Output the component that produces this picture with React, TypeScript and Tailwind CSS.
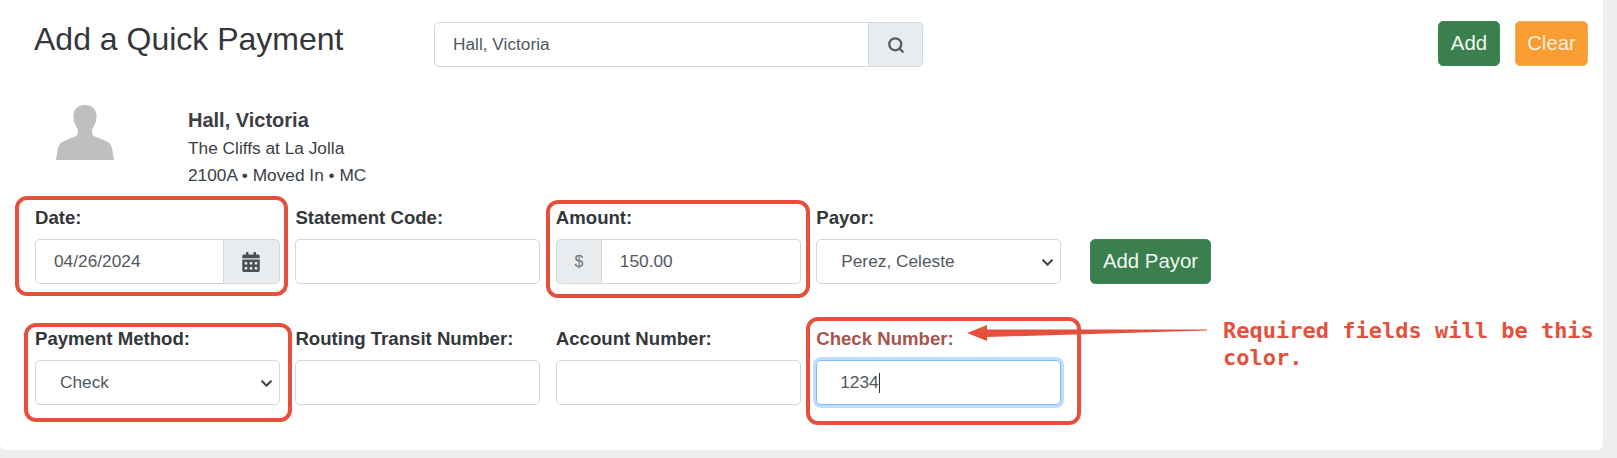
import { Search } from 'lucide-react';
import { FaCalendarAlt, FaChevronDown } from 'react-icons/fa';

const inputClass =
  'h-[45px] w-full rounded-[5px] border border-[#d3d7da] bg-white px-[18px] text-[17.300px] text-[#52585e] outline-none';

function Field({ label, required, children }: { label: string; required?: boolean; children: React.ReactNode }) {
  return (
    <div className="flex flex-col">
      <label className={`mb-[9px] h-[24px] text-[18.600px] leading-6 font-bold ${required ? 'text-[#a9534d]' : 'text-[#33373b]'}`}>
        {label}
      </label>
      {children}
    </div>
  );
}

function SelectBox({ value }: { value: string }) {
  return (
    <div className="relative">
      <select className={`${inputClass} appearance-none pl-[24px]`} defaultValue={value}>
        <option>{value}</option>
      </select>
      <FaChevronDown size={13} className="absolute top-[17px] right-[7px] text-[#3f4347]" />
    </div>
  );
}

function Callout({ className }: { className: string }) {
  return <div className={`absolute rounded-[12px] border-[4px] border-[#e5503c] ${className}`} />;
}

export default function App() {
  return (
    <div className="h-[458px] w-full overflow-hidden bg-[#eeeeee] font-['Liberation_Sans',sans-serif]">
      <div className="relative h-[450px] w-[1603px] rounded-b-md bg-white pt-[21px] pr-[15px] pl-[34px]">
        <div className="flex items-start">
          <h1 className="w-[400px] text-[32px] leading-[36px] text-[#33373b]">Add a Quick Payment</h1>
          <div className="mt-px flex h-[45px] w-[489px]">
            <input
              className="h-full flex-1 rounded-l-[5px] border border-[#d3d7da] bg-white px-[18px] text-[17.300px] text-[#52585e] outline-none"
              defaultValue="Hall, Victoria"
            />
            <div className="flex w-[54px] items-center justify-center rounded-r-[5px] border border-l-0 border-[#d3d7da] bg-[#e9ecef] text-[#55595e]">
              <Search size={18} strokeWidth={3} />
            </div>
          </div>
          <div className="ml-auto flex gap-[15px]">
            <button className="h-[45px] w-[62px] rounded-[5px] border border-[#3a8a5a] bg-[#3a7f4d] text-[20.400px] text-[#f2f7f2]">Add</button>
            <button className="h-[45px] w-[73px] rounded-[5px] border border-[#f0b060] bg-[#f99d33] text-[20.400px] text-[#fdf0dc]">Clear</button>
          </div>
        </div>

        <div className="mt-[39px] flex">
          <div className="-mt-[1px] ml-[22px] w-[132px]">
            <svg width="58" height="55" viewBox="0 0 60 57" preserveAspectRatio="none" fill="#bfbfbf">
              <path d="M30 0c8 0 12 5 12 12 0 5-2 9-4 12-1 2-1 5 0 7 1 1 3 2 6 3l9 4c3 1.500 4 3 5 7l2 12H0l2-12c1-4 2-5.500 5-7l9-4c3-1 5-2 6-3 1-2 1-5 0-7-2-3-4-7-4-12C18 5 22 0 30 0z" />
            </svg>
          </div>
          <div className="text-[17.300px] leading-[27px] text-[#3c4044]">
            <div className="text-[20px] leading-[29px] font-bold">Hall, Victoria</div>
            <div>The Cliffs at La Jolla</div>
            <div>2100A • Moved In • MC</div>
          </div>
        </div>

        <div className="mt-[17px] ml-px grid w-[1026px] grid-cols-4 gap-x-[15.670px] gap-y-[43px]">
          <Field label="Date:">
            <div className="flex h-[45px]">
              <input className="h-full min-w-0 flex-1 rounded-l-[5px] border border-[#d3d7da] bg-white px-[18px] text-[17.300px] text-[#52585e] outline-none" defaultValue="04/26/2024" />
              <div className="flex w-[56px] items-center justify-center rounded-r-[5px] border border-l-0 border-[#d3d7da] bg-[#e9ecef] text-[#4d5156]">
                <FaCalendarAlt size={20} />
              </div>
            </div>
          </Field>
          <Field label="Statement Code:">
            <input className={inputClass} />
          </Field>
          <Field label="Amount:">
            <div className="flex h-[45px]">
              <div className="flex w-[45px] items-center justify-center rounded-l-[5px] border border-r-0 border-[#d3d7da] bg-[#e9ecef] text-base text-[#6b7177]">$</div>
              <input className="h-full min-w-0 flex-1 rounded-r-[5px] border border-[#d3d7da] bg-white px-[18px] text-[17.300px] text-[#52585e] outline-none" defaultValue="150.00" />
            </div>
          </Field>
          <Field label="Payor:">
            <SelectBox value="Perez, Celeste" />
          </Field>
          <Field label="Payment Method:">
            <SelectBox value="Check" />
          </Field>
          <Field label="Routing Transit Number:">
            <input className={inputClass} />
          </Field>
          <Field label="Account Number:">
            <input className={inputClass} />
          </Field>
          <Field label="Check Number:" required>
            <div className="flex h-[45px] w-full items-center rounded-[5px] border border-[#80bdff] bg-white px-[23px] text-[17.300px] text-[#52585e] shadow-[0_0_0_3px_rgba(0,123,255,0.25)]">
              1234<span className="h-[20px] w-px bg-[#333333]" />
            </div>
          </Field>
        </div>

        <button className="absolute top-[239px] left-[1090px] h-[45px] w-[121px] rounded-[5px] border border-[#3a8a5a] bg-[#3a7f4d] text-[20.400px] text-[#f2f7f2]">
          Add Payor
        </button>

        <Callout className="top-[196px] left-[15px] h-[100px] w-[273px]" />
        <Callout className="top-[200px] left-[546px] h-[98px] w-[264px]" />
        <Callout className="top-[323px] left-[24px] h-[99px] w-[268px]" />
        <Callout className="top-[317px] left-[806px] h-[108px] w-[275px]" />

        <svg className="absolute top-[320px] left-[963px]" width="250" height="26" viewBox="0 0 250 26" fill="#e5503c">
          <path d="M4 13l20-8v4.500L244 9.500v1L24 17v4z" />
        </svg>

        <p className="absolute top-[317px] left-[1223px] w-[375px] font-['DejaVu_Sans_Mono',monospace] text-[22px] leading-[27px] font-bold text-[#e5503c]">
          Required fields will be this color.
        </p>
      </div>
    </div>
  );
}
